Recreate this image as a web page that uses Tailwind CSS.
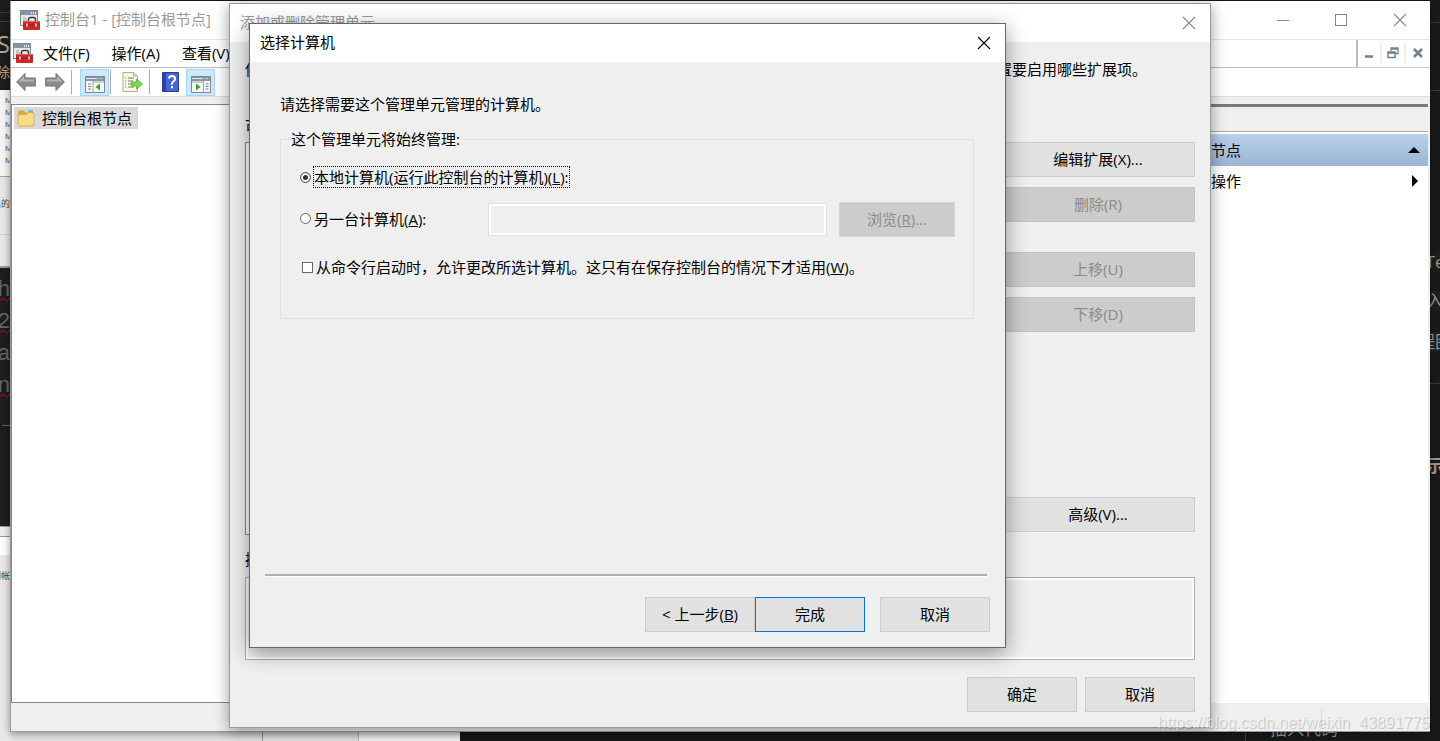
<!DOCTYPE html>
<html lang="zh-CN">
<head>
  <meta charset="UTF-8" />
  <meta name="viewport" content="width=device-width, initial-scale=1.0" />
  <title>控制台1 - [控制台根节点]</title>
  <script src="https://cdn.jsdelivr.net/npm/@tailwindcss/browser@4"></script>
</head>
<body class="relative h-screen overflow-hidden bg-[#17191b] font-['Open_Sans','Noto_Sans_CJK_SC',sans-serif] text-[15px] leading-5 text-black">

  <!-- Shared icons -->
  <svg class="hidden">
    <symbol id="mmc" viewBox="0 0 20 20">
      <rect x="0.5" y="0.5" width="17" height="15" fill="#e6eaed" stroke="#7e8a94" />
      <rect x="1" y="1" width="16" height="4" fill="#8496a5" />
      <path d="M11 3h1M13 3h1M15 3h1" stroke="#fff" stroke-width="1.5" />
      <path d="M3 8h3M3 10h4M3 12h3" stroke="#8fa3b3" />
      <path d="M8.500 11V9.500Q8.500 7.500 10.500 7.500h3Q15.500 7.500 15.500 9.500V11" fill="none" stroke="#4b3535" stroke-width="1.500" />
      <rect x="3" y="11" width="17" height="9" rx="1" fill="#c92a27" />
      <path d="M3.500 11.500h16" stroke="#e0625a" />
      <path d="M3 15h17" stroke="#9c1a18" />
      <path d="M7 13.500v3M16 13.500v3" stroke="#f3e0dc" stroke-width="1.500" />
    </symbol>
    <symbol id="close" viewBox="0 0 14 14">
      <path d="M1 1l12 12M13 1L1 13" fill="none" stroke="currentColor" stroke-width="1.100" />
    </symbol>
    <symbol id="arrow" viewBox="0 0 20 20">
      <path d="M0.700 10L9 1.500V6h10.300v8H9v4.500z" fill="#8d8d8d" stroke="#707070" />
      <path d="M2.500 9.500L8 4v3.500h10v2z" fill="#b4b4b4" />
    </symbol>
  </svg>

  <!-- Windows at the left edge of the desktop -->
  <div class="absolute inset-y-0 left-0 flex w-2.5 flex-col overflow-hidden">
    <div class="flex h-[90px] flex-col items-end bg-[#1c1d1f] text-[#b9b0a0]">
      <span class="mt-3 h-2.5 w-full border-y border-[#3c3e40]"></span>
      <span class="mt-2.5 h-6 text-2xl leading-6">S</span>
      <span class="mt-1.5 text-sm text-[#c0a070]">除</span>
    </div>
    <div class="h-[87px] border-b border-[#a5a5aa] bg-[#f6f6f6] pt-1 pl-[5px] text-[8px] leading-3 text-[#444]">
      <p>M</p><p>M</p><p>M</p><p>M</p><p>M</p><p>M</p>
    </div>
    <div class="flex h-[91px] flex-col items-end border-b-2 border-[#999] bg-[#e8e8e8]">
      <span class="mt-5 w-full border-t border-[#ddd]"></span>
      <span class="text-[9px] leading-3 whitespace-nowrap text-[#444]">出的</span>
      <span class="mt-6 w-full border-t border-[#ccc]"></span>
    </div>
    <div class="flex h-[258px] flex-col items-end bg-[#1d1e1f] pt-[5px] font-['Liberation_Sans',sans-serif] text-[22px] leading-8 text-[#666]">
      <span class="underline decoration-red-600 decoration-wavy decoration-1">h</span>
      <span class="underline decoration-red-600 decoration-wavy decoration-1">2</span>
      <span>na</span>
      <span class="underline decoration-red-600 decoration-wavy decoration-1">n</span>
      <span class="mt-6 h-px w-2 bg-[#666]"></span>
    </div>
    <div class="h-[11px] border-y border-[#999] bg-[#eee]"></div>
    <div class="h-[18px] bg-white"></div>
    <div class="flex grow flex-col items-end bg-[#e9e9e9] pt-[15px] text-[9px] leading-3 whitespace-nowrap text-[#444]">到帐</div>
  </div>

  <!-- Windows under the bottom edge -->
  <div class="absolute inset-x-0 bottom-0 flex h-2.5 pl-2.5">
    <div class="w-[253px] border-r border-[#999] bg-[#e6e6e6]"></div>
    <div class="w-24 border-r border-[#bbb] bg-[#e6e6e6]"></div>
    <div class="w-[101px] bg-[#fafafa]"></div>
    <div class="flex grow items-end justify-end overflow-hidden bg-[#17191b]">
      <span class="mr-6 h-2.5 border-l border-[#444]"></span>
      <span class="mr-[102px] pb-0.5 text-[17px] leading-5 text-[#a09888]">插入代码</span>
    </div>
  </div>

  <!-- Editor at the right edge -->
  <div class="absolute inset-y-0 right-0 flex w-2.5 flex-col items-end overflow-hidden bg-[#17191b] text-[17px] whitespace-nowrap text-[#a09888]">
    <span class="mt-[22px] w-full border-t border-[#3a3a3c]"></span>
    <span class="mt-[67px] w-full border-t border-[#3a3a3c]"></span>
    <span class="mt-[161px] flex w-full justify-center bg-[#1b2021]">Te</span>
    <span class="mt-[19px] flex w-full justify-center bg-[#1b2021]">入</span>
    <span class="mt-[21px] flex w-full justify-center bg-[#1b2021]">程图</span>
    <span class="mt-[31px] w-full border-t border-[#3a3a3c]"></span>
    <span class="mt-[72px] flex w-full justify-center font-bold">示</span>
  </div>

  <!-- Console window -->
  <main class="absolute top-px right-2.5 bottom-[9px] left-2.5 flex flex-col border-b border-l border-[#999] bg-white shadow-[0_2px_8px_rgba(0,0,0,0.4)]">
    <header class="flex h-[38px] items-center pl-[9px] text-[#999]">
      <svg class="size-5"><use href="#mmc" /></svg>
      <h1 class="ml-[5px] grow pb-0.5">控制台1 - [控制台根节点]</h1>
      <button aria-label="最小化" class="flex w-[58px] justify-center"><span class="w-3 border-t border-[#888]"></span></button>
      <button aria-label="最大化" class="flex w-[58px] justify-center"><span class="size-3 border border-[#888]"></span></button>
      <button aria-label="关闭" class="flex w-[60px] justify-center"><svg class="size-3.5 text-[#888]"><use href="#close" /></svg></button>
    </header>

    <div class="flex h-[29px] border-t border-[#e5e5e5]">
      <nav class="flex grow items-center gap-[22px] border-r-2 border-b border-[#b8bec4] pb-0.5 pl-0.5">
        <svg class="-mr-3 size-5"><use href="#mmc" /></svg>
        <button>文件(F)</button>
        <button>操作(A)</button>
        <button>查看(V)</button>
      </nav>
      <div class="flex w-[72px] border-b border-[#c8cdd2] pt-0.5 pb-1 text-[#708090]">
        <button aria-label="最小化子窗口" class="flex w-6 items-center justify-center border-r-2 border-[#efefef]">
          <svg class="size-3" viewBox="0 0 12 12"><path d="M2 9.500h8" stroke="currentColor" stroke-width="2.500" /></svg>
        </button>
        <button aria-label="还原子窗口" class="flex w-6 items-center justify-center border-r-2 border-[#efefef]">
          <svg class="size-3" viewBox="0 0 12 12" fill="none" stroke="currentColor"><path d="M4 4V1h7v5.500H8.500M3.500 2h8" stroke-width="1.300" /><path d="M1 5h7v5.500H1zM1 6h7" stroke-width="1.500" /></svg>
        </button>
        <button aria-label="关闭子窗口" class="flex w-6 items-center justify-center">
          <svg class="size-3" viewBox="0 0 12 12"><path d="M2 2l8 8M10 2l-8 8" stroke="currentColor" stroke-width="2.500" /></svg>
        </button>
      </div>
    </div>

    <div class="flex h-[29px] items-center border-b border-[#ddd] pl-[5px]">
      <button aria-label="后退"><svg class="size-5"><use href="#arrow" /></svg></button>
      <button aria-label="前进" class="ml-[9px]"><svg class="size-5 -scale-x-100"><use href="#arrow" /></svg></button>
      <span class="mr-2 ml-1.5 h-6 border-l border-[#aaa]"></span>
      <button aria-label="显示控制台树" class="flex h-[27px] w-[29px] items-center justify-center border border-[#a6d5fa] bg-[#cce8ff] pt-1">
        <svg class="h-[17px] w-5" viewBox="0 0 20 17"><path d="M.5.5h19v16H.5z" fill="#f6f6f6" stroke="#7d8790" /><path d="M1 1h18v4H1z" fill="#8b99a5" /><path d="M1 2.500h11M14 2.500h1M16 2.500h1" stroke="#dde4ea" /><path d="M8 5v12M8 6h11" stroke="#9aa" /><path d="M3 8h3M3 10.500h3M3 13h3" stroke="#6889a8" /><path d="M15 7.500v7L10.500 11z" fill="#35a52c" /></svg>
      </button>
      <span class="mr-[11px] ml-px h-6 border-l border-[#aaa]"></span>
      <button aria-label="导出列表">
        <svg class="h-5 w-[21px]" viewBox="0 0 21 20"><path d="M1 .5h10.500L15.500 4v15.500H1z" fill="#fbf7dc" stroke="#b3ad9a" /><path d="M11.500.5V4h4" fill="#ddd6b4" stroke="#b3ad9a" /><path d="M3 6h1M3 9h1M3 12h1M3 15h1M6 6h6M6 9h5M6 12h4M6 15h6" stroke="#77747a" /><path d="M9.500 10h5V7l6 5-6 5v-3h-5z" fill="#7ed957" stroke="#62b84a" /></svg>
      </button>
      <span class="mr-3 ml-1.5 h-6 border-l border-[#aaa]"></span>
      <button aria-label="帮助">
        <svg class="h-5 w-[17px]" viewBox="0 0 17 20"><path d="M.5.5h16v19H.5z" fill="#4468cf" stroke="#25418f" /><path d="M1 1h3v18H1z" fill="#2447a5" /><path d="M7 6.500Q7 4 10 4t3 2.700Q13 8.500 11.200 9.500 10 10.200 10 12.500M10 14v2.300" fill="none" stroke="#fff" stroke-width="2" /></svg>
      </button>
      <button aria-label="显示操作窗格" class="ml-[7px] flex h-[27px] w-[29px] items-center justify-center border border-[#a6d5fa] bg-[#cce8ff] pt-1">
        <svg class="h-[17px] w-5" viewBox="0 0 20 17"><path d="M.5.5h19v16H.5z" fill="#f6f6f6" stroke="#7d8790" /><path d="M1 1h18v4H1z" fill="#8b99a5" /><path d="M1 2.500h11M14 2.500h1M16 2.500h1" stroke="#dde4ea" /><path d="M12.500 5v12M1 6h12" stroke="#9aa" /><path d="M14.500 8h3M14.500 10.500h3M14.500 13h3" stroke="#6889a8" /><path d="M5 7.500v7L9.500 11z" fill="#35a52c" /></svg>
      </button>
    </div>
    <div class="h-[7px] bg-[#efefef]"></div>

    <div class="flex grow bg-[#efefef] pr-0.5">
      <section class="grow border border-[#828790] bg-white pt-0.5 pl-0.5">
        <div class="flex h-[22px] w-[124px] items-center gap-[7px] bg-[#d9d9d9] pl-[3px] whitespace-nowrap">
          <svg class="h-[18px] w-[18px]" viewBox="0 0 18 18"><path d="M1 2.500Q1 1.500 2 1.500h5l1.500 2H16q1 0 1 1V16H1z" fill="#d9a840" /><path d="M11 1h5v4h-5z" fill="#7fb4d8" /><path d="M1 5.500h9l1.500-2H16q1 0 1 1V16q0 1-1 1H2q-1 0-1-1z" fill="#f7dc86" stroke="#d3a441" stroke-width=".8" /></svg>
          控制台根节点
        </div>
      </section>
      <aside class="w-[283px] border-t-3 border-[#7b7b7b] bg-white">
        <div class="h-[25px] border-b border-[#a9a9a9] bg-[#efefef]"></div>
        <div class="mt-0.5 flex h-8 items-center justify-between bg-linear-to-b from-[#b9d1ea] to-[#9ab4d3] pr-2 pl-1.5">
          控制台根节点
          <svg class="h-1.5 w-3" viewBox="0 0 12 6"><path d="M0 6l6-6 6 6z" /></svg>
        </div>
        <div class="flex h-[30px] items-center justify-between pr-2.5 pl-9">
          更多操作
          <svg class="h-3 w-1.5" viewBox="0 0 6 12"><path d="M0 0l6 6-6 6z" /></svg>
        </div>
      </aside>
    </div>
    <footer class="flex h-7 justify-end bg-[#efefef] py-1 pr-0.5">
      <span class="w-[107px] border-x border-[#ddd]"></span>
    </footer>
  </main>

  <!-- Add or remove snap-ins -->
  <section class="absolute top-[3px] left-[229px] flex w-[982px] flex-col border border-[#999] bg-[#efefef] shadow-[0_3px_14px_rgba(0,0,0,0.4)]">
    <header class="flex h-[38px] items-center justify-between bg-white pr-3.5 pl-2.5 text-[#999]">
      <h2 class="pb-0.5">添加或删除管理单元</h2>
      <button aria-label="关闭"><svg class="size-3.5 text-[#888]"><use href="#close" /></svg></button>
    </header>
    <div class="flex flex-col px-[15px] pt-[17px] pb-[15px]">
      <div class="flex justify-between pr-12"><p>你可以</p><p>置要启用哪些扩展项。</p></div>
      <label for="snapins" class="mt-[37px] mb-1.5">可用的管理单元(S):</label>
      <div class="flex gap-[15px]">
        <select id="snapins" size="10" class="h-[393px] grow border border-[#828790] bg-white"></select>
        <div class="flex w-[194px] flex-col pb-[3px]">
          <button class="h-[35px] border border-[#ccc] bg-[#e1e1e1] pb-0.5">编辑扩展(X)...</button>
          <button disabled class="mt-2.5 h-[35px] border border-[#c3c3c3] bg-[#ccc] pb-0.5 text-[#8a8a8a]">删除(R)</button>
          <button disabled class="mt-[30px] h-[35px] border border-[#c3c3c3] bg-[#ccc] pb-0.5 text-[#8a8a8a]">上移(U)</button>
          <button disabled class="mt-2.5 h-[35px] border border-[#c3c3c3] bg-[#ccc] pb-0.5 text-[#8a8a8a]">下移(D)</button>
          <button class="mt-auto h-[35px] border border-[#ccc] bg-[#e1e1e1] pb-0.5">高级(V)...</button>
        </div>
      </div>
      <label for="description" class="mt-3.5 mb-2">描述(D):</label>
      <textarea id="description" readonly class="h-[83px] resize-none border border-[#adadad] bg-[#efefef] inset-ring-2 inset-ring-white"></textarea>
      <div class="mt-[17px] flex justify-end gap-2">
        <button class="h-[35px] w-[110px] border border-[#ccc] bg-[#e1e1e1] pb-0.5">确定</button>
        <button class="h-[35px] w-[110px] border border-[#ccc] bg-[#e1e1e1] pb-0.5">取消</button>
      </div>
    </div>
  </section>

  <!-- Select computer -->
  <section class="absolute top-[23px] left-[249px] w-[757px] border border-[#666] bg-[#efefef] shadow-[0_5px_20px_rgba(0,0,0,0.4)]">
    <header class="flex h-[38px] items-center justify-between bg-white pr-3.5 pl-2.5">
      <h2 class="pb-0.5">选择计算机</h2>
      <button aria-label="关闭"><svg class="size-3.5"><use href="#close" /></svg></button>
    </header>
    <form class="pt-8 pb-[15px]">
      <p class="px-[30px]">请选择需要这个管理单元管理的计算机。</p>
      <fieldset class="mr-[31px] ml-[30px] mt-[15px] h-[190px] border border-[#e0e0e0] pl-[19px]">
        <legend class="-ml-[11px] px-0.5">这个管理单元将始终管理:</legend>
        <div class="mt-[17px] flex items-center gap-0.5">
          <input id="local" type="radio" name="target" checked class="size-[11px] appearance-none rounded-full border border-[#666] bg-white checked:bg-[#333] checked:inset-ring-2 checked:inset-ring-white" />
          <label for="local" class="border border-dotted border-black">本地计算机(运行此控制台的计算机)(<u>L</u>):</label>
        </div>
        <div class="mt-3.5 flex h-[35px] items-center">
          <input id="other" type="radio" name="target" class="mb-0.5 size-[11px] appearance-none rounded-full border border-[#666] bg-white" />
          <label for="other" class="ml-[3px] w-[174px] pb-0.5">另一台计算机(<u>A</u>):</label>
          <input type="text" disabled aria-label="计算机名" class="h-[33px] w-[339px] border border-[#e0e0e0] bg-[#efefef] px-2 inset-ring-2 inset-ring-white" />
          <button type="button" disabled class="ml-3 h-[35px] w-[116px] border border-[#d5d5d5] bg-[#ccc] pb-0.5 text-[#8a8a8a]">浏览(<u>R</u>)...</button>
        </div>
        <div class="mt-5 ml-0.5 flex items-center gap-[3px]">
          <input id="allow" type="checkbox" class="size-[11px] appearance-none border border-[#666] bg-white" />
          <label for="allow">从命令行启动时，允许更改所选计算机。这只有在保存控制台的情况下才适用(<u>W</u>)。</label>
        </div>
      </fieldset>
      <hr class="mt-[255px] mr-[18px] ml-[15px] h-[3px] border-t-2 border-b border-t-[#b0b0b0] border-b-white" />
      <div class="mt-5 flex justify-end pr-[15px]">
        <button type="button" class="h-[35px] w-[110px] border border-[#ccc] bg-[#e1e1e1] pb-0.5">&lt; 上一步(<u>B</u>)</button>
        <button type="submit" class="h-[35px] w-[110px] border border-[#0078d7] bg-[#e1e1e1] pb-0.5">完成</button>
        <button type="button" class="ml-[15px] h-[35px] w-[110px] border border-[#ccc] bg-[#e1e1e1] pb-0.5">取消</button>
      </div>
    </form>
  </section>

  <p class="absolute right-2.5 bottom-1.5 font-['Liberation_Sans',sans-serif] text-base text-white/50 [text-shadow:1px_1px_1px_rgba(0,0,0,0.2)]">https://blog.csdn.net/weixin_43891775</p>

</body>
</html>
